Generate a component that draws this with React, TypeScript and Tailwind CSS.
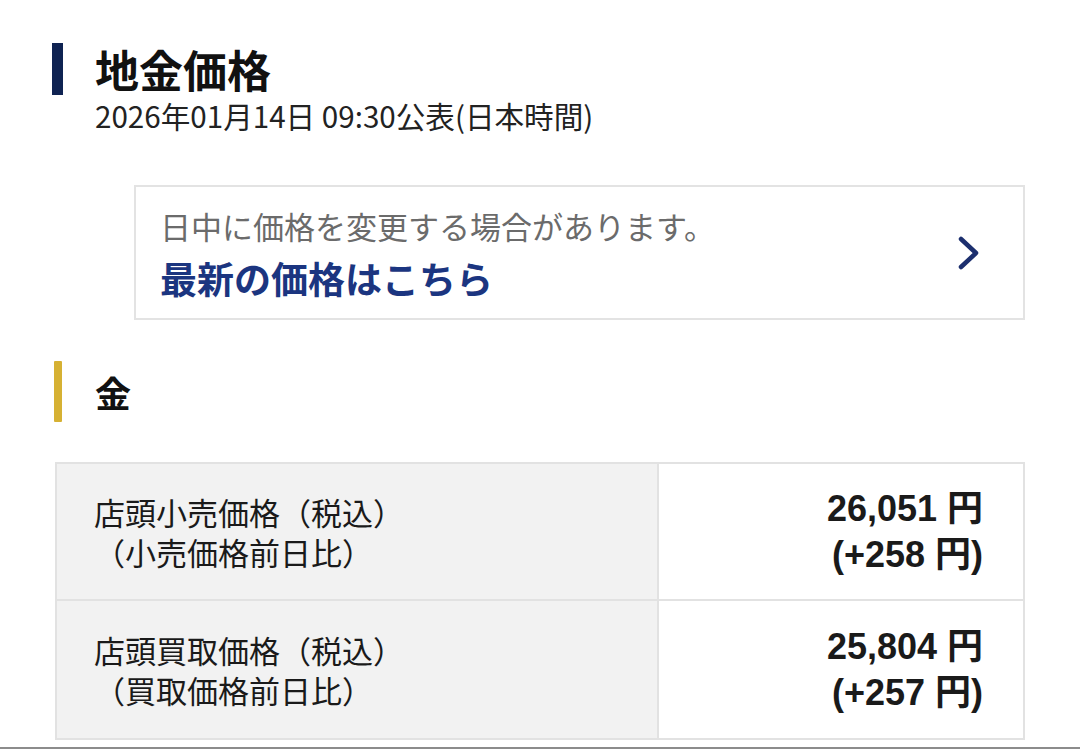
import React from "react";

const JP = '"Noto Sans CJK JP", "Noto Sans", sans-serif';
const NUM = '"Liberation Sans", "Noto Sans CJK JP", sans-serif';

function Row({ label1, label2, price, diff, last }: { label1: string; label2: string; price: string; diff: string; last?: boolean }) {
  return (
    <div className={`flex h-[137px] ${last ? "" : "border-b-2 border-[#e2e2e2]"}`}>
      <div className="w-[602px] shrink-0 bg-[#f2f2f2] border-r-2 border-[#e2e2e2] flex flex-col justify-center pl-[37px] text-[31px] leading-[40px] text-[#1a1a1a]" style={{ fontFamily: JP }}>
        <div>{label1}</div>
        <div>{label2}</div>
      </div>
      <div className="flex-1 bg-white flex flex-col justify-center items-end pr-[40px] text-[36px] leading-[46px] font-bold text-[#1a1a1a]" style={{ fontFamily: NUM }}>
        <div>{price}</div>
        <div>{diff}</div>
      </div>
    </div>
  );
}

export default function App() {
  return (
    <div className="w-[1080px] h-[749px] bg-white overflow-hidden flex flex-col" style={{ fontFamily: JP }}>
      <div className="pt-[43px] pl-[52px]">
        <div className="flex items-center h-[52px]">
          <div className="w-[11px] h-[52px] bg-[#0f2352]" />
          <div className="ml-[32px] text-[44px] leading-[48px] font-bold text-[#111]">地金価格</div>
        </div>
        <div className="mt-[3px] ml-[43px] text-[29.6px] leading-[36px] text-[#222]">2026年01月14日 09:30公表(日本時間)</div>
      </div>

      <div className="mt-[51px] ml-[134px] w-[891px] h-[135px] border-2 border-[#e3e3e3] flex items-center justify-between pl-[24px] pr-[43px]">
        <div className="flex flex-col">
          <div className="text-[31px] leading-[40px] text-[#6b6b6b]">日中に価格を変更する場合があります。</div>
          <div className="mt-[10px] text-[37px] leading-[44px] font-bold text-[#1b3580]">最新の価格はこちら</div>
        </div>
        <svg width="22" height="34" viewBox="0 0 22 34" fill="none">
          <path d="M3 3 L18 17 L3 31" stroke="#1c2f6e" strokeWidth="4.5" strokeLinecap="round" strokeLinejoin="round" />
        </svg>
      </div>

      <div className="mt-[41px] ml-[54px] flex items-center h-[61px]">
        <div className="w-[8px] h-[61px] bg-[#d6b133] rounded-[1px]" />
        <div className="ml-[33px] text-[36px] leading-[44px] font-bold text-[#111]">金</div>
      </div>

      <div className="mt-[40px] ml-[55px] w-[970px] border-2 border-[#e2e2e2] flex flex-col">
        <Row label1="店頭小売価格（税込）" label2="（小売価格前日比）" price="26,051 円" diff="(+258 円)" />
        <Row label1="店頭買取価格（税込）" label2="（買取価格前日比）" price="25,804 円" diff="(+257 円)" last />
      </div>

      <div className="mt-[7px] h-[2px] w-full bg-[#8c8c8c]" />
    </div>
  );
}
